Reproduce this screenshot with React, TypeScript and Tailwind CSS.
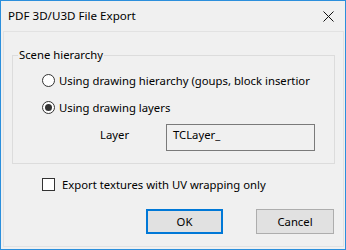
export default function App() {
  return (
    <div
      className="w-[346px] h-[250px] flex flex-col border border-[#2b8fdc] bg-[#f0f0f0] text-[11.3px] text-black"
      style={{ fontFamily: '"Noto Sans", "Liberation Sans", sans-serif' }}
    >
      {/* title bar */}
      <div className="h-[30px] flex items-center justify-between pl-[7px] pr-[11px] bg-[#f0f0f0]">
        <span className="leading-none text-[11.6px]">PDF 3D/U3D File Export</span>
        <svg width="11" height="11" viewBox="0 0 11 11" className="mt-[1px]">
          <path d="M0.5 0.5 L10.5 10.5 M10.5 0.5 L0.5 10.5" stroke="#111" strokeWidth="1" />
        </svg>
      </div>

      {/* client panel */}
      <div className="flex-1 ml-[2px] mr-[1px] mb-[2px] border border-[#e2e2e2] flex flex-col">
        <fieldset className="mt-[15px] mx-[8px] border border-[#dcdcdc] pb-[12px]">
          <legend className="ml-[5px] px-[1px] leading-[16px]">Scene hierarchy</legend>

          <div className="pl-[29px]">
            <div className="mt-[9px] h-[17px] flex items-center">
              <span className="w-[13px] h-[13px] rounded-full border border-[#333] bg-white shrink-0" />
              <span className="ml-[4px] whitespace-nowrap leading-[17px]">
                Using drawing hierarchy (goups, block insertior
              </span>
            </div>

            <div className="mt-[10px] h-[17px] flex items-center">
              <span className="w-[13px] h-[13px] rounded-full border border-[#333] bg-white shrink-0 flex items-center justify-center">
                <span className="w-[7px] h-[7px] rounded-full bg-[#333]" />
              </span>
              <span className="ml-[4px] leading-[17px]">Using drawing layers</span>
            </div>

            <div className="mt-[8px] flex items-start">
              <span className="ml-[58px] w-[66px] mt-[2px] leading-[17px]">Layer</span>
              <div className="w-[149px] h-[27px] border border-[#7a7a7a] bg-[#f0f0f0] pl-[6px] pt-[1px] leading-[17px]">
                TCLayer_
              </div>
            </div>
          </div>
        </fieldset>

        <div className="mt-[12px] h-[17px] flex items-center pl-[38px]">
          <span className="w-[13px] h-[13px] border border-[#333] bg-white shrink-0" />
          <span className="ml-[7px] leading-[17px]">Export textures with UV wrapping only</span>
        </div>

        <div className="mt-[16px] flex justify-end gap-[33px] mr-[9px]">
          <button className="w-[77px] h-[25px] border-2 border-[#0078d7] bg-[#e1e1e1] leading-none">
            OK
          </button>
          <button className="w-[78px] h-[25px] border border-[#adadad] bg-[#e1e1e1] leading-none">
            Cancel
          </button>
        </div>
      </div>
    </div>
  )
}
